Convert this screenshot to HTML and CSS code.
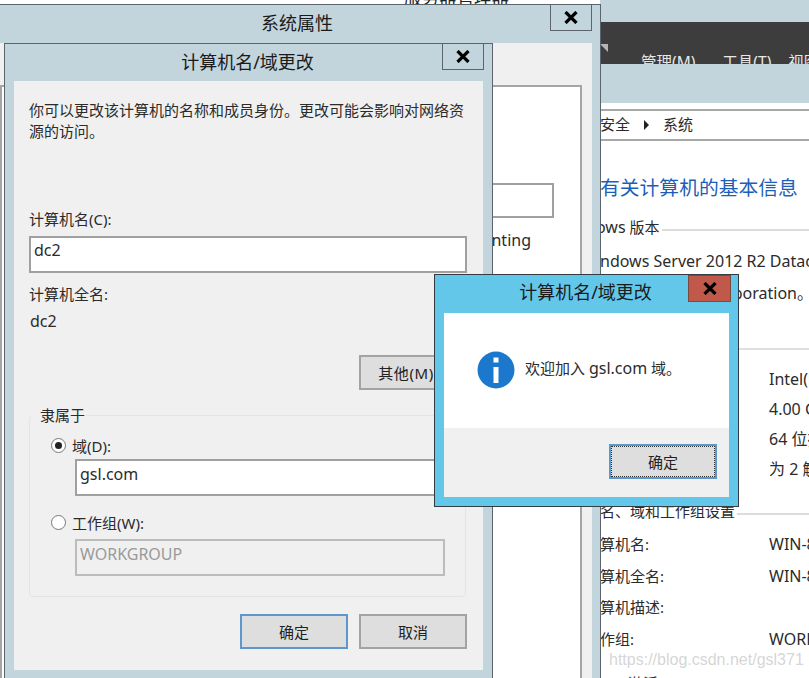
FILE: index.html
```html
<!DOCTYPE html>
<html lang="zh-CN">
<head>
    <meta charset="UTF-8">
    <meta name="viewport" content="width=device-width, initial-scale=1.0">
    <title>计算机名/域更改</title>
    <link rel="stylesheet" href="styles.css">
</head>
<body>
    <div class="desktop">
        <!-- server manager, mostly hidden behind the dialogs -->
        <div class="server-window">
            <div class="sm-frame"></div>
            <div class="sm-toolbar">
                <span class="sm-arrow"></span>
                <span class="sm-menu sm-menu-manage">管理(M)</span>
                <span class="sm-menu sm-menu-tools">工具(T)</span>
                <span class="sm-menu sm-menu-view">视图</span>
            </div>
            <div class="sm-subhead"></div>
            <div class="breadcrumb">
                <span>安全</span>
                <span class="crumb-arrow"></span>
                <span>系统</span>
            </div>
            <h2 class="sys-heading">有关计算机的基本信息</h2>
            <div class="section-title section-edition"><span><span class="latin">ows</span> 版本</span></div>
            <div class="edition-line latin">ndows Server 2012 R2 Datacenter</div>
            <div class="copyright-line latin">Microsoft Corporation。</div>
            <div class="rule-system"></div>
            <div class="spec-list">
                <div class="spec">Intel(R) Xeon(R)</div>
                <div class="spec">4.00 GB</div>
                <div class="spec">64 位操作系统</div>
                <div class="spec">为 2 触摸点</div>
            </div>
            <div class="section-title section-domain"><span>名、域和工作组设置</span></div>
            <div class="name-list">
                <div class="name-row"><span class="name-key">算机名:</span><span class="latin">WIN-8LHC</span></div>
                <div class="name-row"><span class="name-key">算机全名:</span><span class="latin">WIN-8LHC</span></div>
                <div class="name-row"><span class="name-key">算机描述:</span></div>
                <div class="name-row"><span class="name-key">作组:</span><span class="latin">WORKGROUP</span></div>
                <div class="name-row name-row-cut"><span class="name-key-indent">激活</span></div>
            </div>
        </div>

        <div class="top-strip"><span>服务器管理器</span></div>

        <!-- system properties -->
        <div class="window sys-props">
            <div class="titlebar sys-titlebar">系统属性</div>
            <button class="close-btn sys-close">
                <svg width="14" height="13" viewBox="0 0 14 13"><path d="M1.5 1 12.5 12M12.5 1 1.5 12" stroke="#000" stroke-width="3.2" fill="none"/></svg>
            </button>
            <div class="sys-body">
                <div class="sys-tab">
                    <div class="sys-field"></div>
                    <div class="sys-text latin">Accounting</div>
                </div>
            </div>
        </div>

        <!-- computer name changes -->
        <div class="window name-dialog">
            <div class="titlebar name-titlebar">计算机名/域更改</div>
            <button class="close-btn name-close">
                <svg width="14" height="13" viewBox="0 0 14 13"><path d="M1.5 1 12.5 12M12.5 1 1.5 12" stroke="#000" stroke-width="3.2" fill="none"/></svg>
            </button>
            <div class="name-body">
                <p class="intro">你可以更改该计算机的名称和成员身份。更改可能会影响对网络资源的访问。</p>
                <div class="label label-name">计算机名(C):</div>
                <div class="textbox">dc2</div>
                <div class="label label-full">计算机全名:</div>
                <div class="full-name latin">dc2</div>
                <div class="more-row"><button class="btn btn-more">其他(M)...</button></div>
                <fieldset class="member-of">
                    <legend>隶属于</legend>
                    <div class="radio-row radio-row-domain"><span class="radio checked"></span>域(D):</div>
                    <div class="textbox textbox-sub textbox-domain">gsl.com</div>
                    <div class="radio-row radio-row-group"><span class="radio"></span>工作组(W):</div>
                    <div class="textbox textbox-sub textbox-group disabled">WORKGROUP</div>
                </fieldset>
                <div class="btn-row">
                    <button class="btn btn-default">确定</button>
                    <button class="btn">取消</button>
                </div>
            </div>
        </div>

        <!-- welcome message -->
        <div class="window welcome">
            <div class="titlebar welcome-titlebar">计算机名/域更改</div>
            <button class="close-btn welcome-close">
                <svg width="14" height="13" viewBox="0 0 14 13"><path d="M1.5 1 12.5 12M12.5 1 1.5 12" stroke="#000" stroke-width="3.2" fill="none"/></svg>
            </button>
            <div class="welcome-body">
                <div class="welcome-msg">
                    <svg class="info-icon" width="38" height="38" viewBox="0 0 38 38">
                        <circle cx="19" cy="19" r="18.5" fill="#1b78cc"/>
                        <rect x="16.5" y="6.5" width="5" height="5" fill="#fff"/>
                        <rect x="16.5" y="16" width="5" height="16" fill="#fff"/>
                    </svg>
                    <span>欢迎加入 <span class="latin">gsl.com</span> 域。</span>
                </div>
                <div class="welcome-foot">
                    <button class="btn btn-default btn-focus"><span>确定</span></button>
                </div>
            </div>
        </div>

        <div class="watermark">https://blog.csdn.net/gsl371</div>
    </div>
</body>
</html>
```

FILE: styles.css
```css
* {
    box-sizing: border-box;
}

body {
    margin: 0;
    background: #fff;
    font-family: "Noto Sans", "Noto Sans CJK SC", sans-serif;
    font-size: 15px;
    color: #2b2b2b;
    overflow: hidden;
}

.latin {
    font-size: 16px;
}

.desktop {
    position: relative;
    width: 809px;
    height: 678px;
    overflow: hidden;
}

/* server manager behind everything */
.server-window {
    position: absolute;
    left: 600px;
    top: 0;
    width: 209px;
    height: 678px;
    overflow: hidden;
    background: #fff;
    white-space: nowrap;
}

.sm-frame {
    height: 22px;
    background: #c2d5dc;
}

.sm-toolbar {
    display: flex;
    height: 42px;
    background: #3d3d3d;
    overflow: hidden;
}

.sm-arrow {
    width: 0;
    height: 0;
    margin-top: 22px;
    border-top: 8px solid #b5b5b5;
    border-left: 8px solid transparent;
}

.sm-menu {
    color: #e8e8e8;
    font-size: 15.5px;
    line-height: 20px;
    margin-top: 30px;
}

.sm-menu-manage { margin-left: 33px; }
.sm-menu-tools { margin-left: 27px; }
.sm-menu-view { margin-left: 17px; }

.sm-subhead {
    height: 39px;
    background: #c2d5dc;
}

.breadcrumb {
    display: flex;
    align-items: center;
    gap: 14px;
    height: 32px;
    margin-top: 6px;
    padding-bottom: 4px;
    border-top: 2px solid #a8a8a8;
    border-bottom: 2px solid #a8a8a8;
    background: #fff;
    font-size: 15px;
}

.crumb-arrow {
    width: 0;
    height: 0;
    margin-top: 3px;
    border-left: 5px solid #222;
    border-top: 5px solid transparent;
    border-bottom: 5px solid transparent;
}

.sys-heading {
    margin: 33px 0 0;
    font-size: 19.8px;
    font-weight: 400;
    line-height: 28px;
    color: #1c5fb8;
}

.section-title {
    display: flex;
    align-items: center;
    gap: 2px;
    height: 20px;
    line-height: 20px;
}

.section-title::after {
    content: "";
    flex: 1;
    height: 2px;
    margin-top: 6px;
    background: #dcdcdc;
}

.section-edition {
    margin-top: 15px;
    margin-left: -4px;
}

.edition-line {
    margin-top: 14px;
    line-height: 20px;
}

.copyright-line {
    width: 213px;
    margin-top: 12px;
    line-height: 20px;
    text-align: right;
}

.rule-system {
    height: 2px;
    margin-top: 45px;
    background: #dfdfdf;
}

.spec-list {
    margin-top: 19px;
    margin-left: 169px;
}

.spec {
    height: 30px;
    font-size: 16px;
    line-height: 20px;
}

.section-domain {
    margin-top: 12px;
}

.name-list {
    margin-top: 13px;
}

.name-row {
    display: flex;
    height: 31.7px;
    line-height: 20px;
}

.name-key {
    flex-shrink: 0;
    width: 169px;
}

.name-row-cut {
    margin-top: 12px;
}

.name-key-indent {
    margin-left: 28px;
}

.top-strip {
    position: absolute;
    left: 0;
    top: 0;
    width: 600px;
    height: 5px;
    padding-left: 404px;
    background: #fff;
    overflow: hidden;
}

.top-strip span {
    display: block;
    margin-top: -13px;
    font-size: 17.5px;
    line-height: 20px;
    color: #222;
}

/* dialog frames */
.window {
    position: absolute;
    border: 1px solid #5c656b;
    background: #c2d5dc;
}

.titlebar {
    text-align: center;
    color: #1a1a1a;
    font-size: 18px;
}

.close-btn {
    position: absolute;
    top: -1px;
    display: flex;
    align-items: center;
    justify-content: center;
    padding: 0;
    border: 1px solid #5c656b;
    background: transparent;
}

.sys-props {
    left: -1px;
    top: 4px;
    width: 602px;
    height: 690px;
}

.sys-titlebar {
    height: 38px;
    padding-top: 6px;
    line-height: 25px;
    text-indent: -6px;
}

.sys-close {
    right: 8px;
    width: 42px;
    height: 27px;
}

.sys-body {
    height: 640px;
    margin-right: 8px;
    padding-top: 42px;
    background: #f0f0f0;
}

.sys-tab {
    height: 620px;
    margin-right: 10px;
    padding-top: 96px;
    border: 2px solid #a5a5a5;
    background: #fff;
}

.sys-field {
    width: 452px;
    height: 35px;
    margin-left: 100px;
    border: 2px solid #a0a0a0;
}

.sys-text {
    width: 529px;
    margin-top: 12px;
    text-align: right;
    line-height: 20px;
}

.name-dialog {
    left: 4px;
    top: 43px;
    width: 489px;
    height: 640px;
}

.name-titlebar {
    height: 37px;
    padding-top: 6px;
    line-height: 25px;
    text-indent: -2px;
}

.name-close {
    right: 8px;
    width: 42px;
    height: 27px;
}

.name-body {
    width: 469px;
    height: 589px;
    margin-left: 9px;
    padding: 19px 16px 0 15px;
    background: #f0f0f0;
}

.intro {
    margin: 0;
    line-height: 21px;
}

.label {
    line-height: 20px;
}

.label-name {
    margin-top: 67px;
    margin-bottom: 7px;
}

.textbox {
    height: 37px;
    padding-left: 3px;
    border: 2px solid #a0a0a0;
    background: #fff;
    line-height: 24px;
    font-size: 16px;
}

.label-full {
    margin-top: 11px;
}

.full-name {
    margin-top: 7px;
    margin-left: 1px;
    line-height: 20px;
}

.more-row {
    display: flex;
    justify-content: flex-end;
    margin-top: 24px;
}

.btn {
    width: 108px;
    height: 35px;
    padding: 0;
    border: 2px solid #a3a3a3;
    background: #dedede;
    color: #222;
    font-family: inherit;
    font-size: 15px;
}

.btn-more {
    letter-spacing: 0.6px;
}

.btn-default {
    border-color: #5d97cb;
}

.member-of {
    height: 192px;
    margin: 15px 1px 0 0;
    padding: 0 20px 0 22px;
    border: 1px solid #e0e5e7;
    border-radius: 4px;
}

.member-of legend {
    margin-left: -21px;
    padding: 0 1px 0 9px;
    line-height: 20px;
    font-size: 15px;
}

.radio-row {
    display: flex;
    align-items: center;
    gap: 6px;
    height: 20px;
    margin-left: -1px;
}

.radio-row-domain {
    margin-top: 10px;
}

.radio-row-group {
    margin-top: 16px;
}

.textbox-sub {
    margin-left: 23px;
    padding-top: 1px;
}

.textbox-domain {
    margin-top: 4px;
}

.textbox-group {
    margin-top: 7px;
}

.radio {
    display: flex;
    align-items: center;
    justify-content: center;
    width: 15px;
    height: 15px;
    border: 1px solid #777;
    border-radius: 50%;
    background: #fff;
}

.checked::after {
    content: "";
    width: 7px;
    height: 7px;
    border-radius: 50%;
    background: #222;
}

.disabled {
    border-color: #bcbcbc;
    background: transparent;
    color: #9a9a9a;
}

.btn-row {
    display: flex;
    justify-content: flex-end;
    gap: 11px;
    margin-top: 17px;
}

.welcome {
    left: 434px;
    top: 274px;
    width: 305px;
    height: 233px;
    border-color: #333c42;
    background: #63c7ea;
}

.welcome-titlebar {
    height: 38px;
    padding-top: 5px;
    line-height: 25px;
    text-indent: -2px;
}

.welcome-close {
    right: 7px;
    top: 0;
    width: 43px;
    height: 27px;
    background: #c0594a;
    border-color: #7a4a42;
}

.welcome-body {
    display: flex;
    flex-direction: column;
    height: 184px;
    margin: 0 9px;
    background: #fff;
}

.welcome-msg {
    display: flex;
    align-items: flex-start;
    gap: 10px;
    height: 115px;
    padding: 38px 0 0 33px;
}

.welcome-msg > span {
    margin-top: 5px;
    line-height: 24px;
}

.welcome-foot {
    flex: 1;
    display: flex;
    justify-content: flex-end;
    padding: 16px 12px 0 0;
    background: #f0f0f0;
}

.btn-focus span {
    display: flex;
    align-items: center;
    justify-content: center;
    height: 29px;
    margin: 1px;
    outline: 1px dotted #333;
}

.watermark {
    position: absolute;
    left: 609px;
    top: 649px;
    font-family: "Liberation Sans", sans-serif;
    font-size: 16px;
    line-height: 22px;
    color: rgba(190, 190, 190, 0.65);
    white-space: nowrap;
}
```
